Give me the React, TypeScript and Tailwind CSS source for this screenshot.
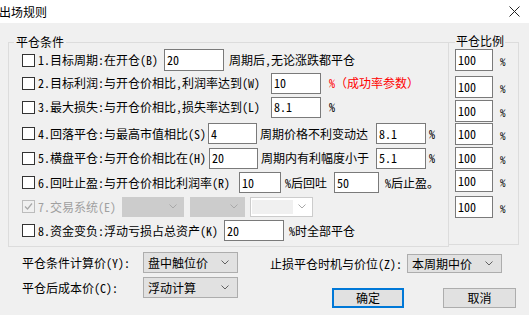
import React from "react";

const font = "font-[family-name:Noto_Sans_Mono_CJK_SC,Noto_Sans_CJK_SC,sans-serif]";

function Check({ disabled }: { disabled?: boolean }) {
    if (disabled) {
        return (
            <span className="flex h-[13px] w-[13px] shrink-0 items-center justify-center border border-[#bcbcbc] bg-[#f0f0f0]">
                <svg width="9" height="9" viewBox="0 0 9 9">
                    <path d="M1 4.5 L3.5 7 L8 1.5" stroke="#a8a8a8" fill="none" strokeWidth="1.2" />
                </svg>
            </span>
        );
    }
    return <span className="h-[13px] w-[13px] shrink-0 border border-[#333333] bg-white" />;
}

function Field({ value, className }: { value: string; className: string }) {
    return (
        <div className={`flex shrink-0 items-center border border-[#7a7a7a] bg-white pl-[2px] leading-none ${className}`}>
            {value}
        </div>
    );
}

function Chevron({ color = "#606060" }: { color?: string }) {
    return (
        <svg width="8" height="5" viewBox="0 0 8 5" className="shrink-0">
            <path d="M0.5 0.5 L4 4 L7.5 0.5" stroke={color} fill="none" strokeWidth="1" />
        </svg>
    );
}

function Combo({ label, className }: { label: string; className: string }) {
    return (
        <div className={`flex shrink-0 items-center justify-between border border-[#adadad] bg-[#e1e1e1] pl-[4px] pr-[8px] text-[12px] leading-none ${className}`}>
            <span>{label}</span>
            <Chevron />
        </div>
    );
}

const ratioTops = ["mt-[6px]", "mt-[5px]", "mt-[2px]", "mt-[1px]", "mt-[2px]", "mt-[1px]", "mt-[4px]"];

export default function App() {
    return (
        <div className={`h-[315px] w-[529px] overflow-hidden bg-[#f0f0f0] text-[12px] font-light text-black ${font}`}>
            {/* title bar */}
            <div className="flex h-[23px] items-center justify-between bg-white">
                <span className="ml-[-1px] text-[12px] leading-none">出场规则</span>
                <svg width="11" height="11" viewBox="0 0 11 11" className="mr-[9px]">
                    <path d="M0.5 0.5 L10.5 10.5 M10.5 0.5 L0.5 10.5" stroke="#222" strokeWidth="1" />
                </svg>
            </div>

            <div className="mt-[19px] flex pl-[8px]">
                {/* 平仓条件 */}
                <div className="relative h-[205px] w-[441px] border border-[#dcdcdc] pt-[5px]">
                    <span className="absolute left-[5px] top-[-9px] bg-[#f0f0f0] px-[2px] text-[12px] leading-[16px]">平仓条件</span>

                    <div className="flex h-[24px] items-center pl-[13px]">
                        <Check />
                        <span className="ml-[3px] w-[126px] shrink-0 whitespace-nowrap">1.目标周期:在开仓(B)</span>
                        <Field value="20" className="h-[22px] w-[60px]" />
                        <span className="ml-[5px] whitespace-nowrap">周期后,无论涨跌都平仓</span>
                    </div>

                    <div className="flex h-[22px] items-center pl-[13px]">
                        <Check />
                        <span className="ml-[3px] w-[233px] shrink-0 whitespace-nowrap">2.目标利润:与开仓价相比,利润率达到(W)</span>
                        <Field value="10" className="h-[21px] w-[50px]" />
                        <span className="ml-[8px] whitespace-nowrap text-[#ff0000]">%（成功率参数）</span>
                    </div>

                    <div className="flex h-[26px] items-center pl-[13px]">
                        <Check />
                        <span className="ml-[3px] w-[233px] shrink-0 whitespace-nowrap">3.最大损失:与开仓价相比,损失率达到(L)</span>
                        <Field value="8.1" className="h-[21px] w-[50px]" />
                        <span className="ml-[8px]">%</span>
                    </div>

                    <div className="flex h-[27px] items-center pl-[13px]">
                        <Check />
                        <span className="ml-[3px] w-[170px] shrink-0 whitespace-nowrap">4.回落平仓:与最高市值相比(S)</span>
                        <Field value="4" className="h-[21px] w-[49px]" />
                        <span className="ml-[3px] w-[116px] shrink-0 whitespace-nowrap">周期价格不利变动达</span>
                        <Field value="8.1" className="h-[21px] w-[50px]" />
                        <span className="ml-[3px]">%</span>
                    </div>

                    <div className="flex h-[22px] items-center pl-[13px]">
                        <Check />
                        <span className="ml-[3px] w-[171px] shrink-0 whitespace-nowrap">5.横盘平仓:与开仓价相比在(H)</span>
                        <Field value="20" className="h-[21px] w-[49px]" />
                        <span className="ml-[3px] w-[115px] shrink-0 whitespace-nowrap">周期内有利幅度小于</span>
                        <Field value="5.1" className="h-[21px] w-[50px]" />
                        <span className="ml-[3px]">%</span>
                    </div>

                    <div className="flex h-[27px] items-center pl-[13px]">
                        <Check />
                        <span className="ml-[3px] w-[201px] shrink-0 whitespace-nowrap">6.回吐止盈:与开仓价相比利润率(R)</span>
                        <Field value="10" className="h-[21px] w-[42px]" />
                        <span className="ml-[4px] w-[49px] shrink-0 whitespace-nowrap">%后回吐</span>
                        <Field value="50" className="h-[21px] w-[45px]" />
                        <span className="ml-[6px] whitespace-nowrap">%后止盈。</span>
                    </div>

                    <div className="flex h-[21px] items-center pl-[13px] text-[#a0a0a0]">
                        <Check disabled />
                        <span className="ml-[3px] w-[84px] shrink-0 whitespace-nowrap">7.交易系统(E)</span>
                        <div className="flex h-[20px] w-[62px] items-center justify-end border border-[#cccccc] bg-[#cccccc] pr-[6px]">
                            <Chevron color="#a8a8a8" />
                        </div>
                        <div className="ml-[6px] flex h-[20px] w-[55px] items-center justify-end border border-[#cccccc] bg-[#cccccc] pr-[6px]">
                            <Chevron color="#a8a8a8" />
                        </div>
                        <div className="ml-[5px] flex h-[20px] w-[63px] items-center justify-between border border-[#cccccc] bg-white pl-[1px] pr-[6px]">
                            <span className="h-[14px] w-[41px] bg-[#f0f0f0]" />
                            <Chevron color="#a8a8a8" />
                        </div>
                    </div>

                    <div className="flex h-[27px] items-center pl-[13px]">
                        <Check />
                        <span className="ml-[3px] w-[186px] shrink-0 whitespace-nowrap">8.资金变负:浮动亏损占总资产(K)</span>
                        <Field value="20" className="h-[21px] w-[60px]" />
                        <span className="ml-[5px] whitespace-nowrap">%时全部平仓</span>
                    </div>
                </div>

                {/* 平仓比例 */}
                <div className="relative ml-[-1px] flex h-[203px] w-[71px] flex-col border border-[#dcdcdc] pl-[6px]">
                    <span className="absolute left-[6px] top-[-10px] bg-[#f0f0f0] px-[1px] text-[12px] leading-[16px]">平仓比例</span>
                    {ratioTops.map((mt, i) => (
                        <div key={i} className={`flex items-center ${mt}`}>
                            <Field value="100" className="h-[22px] w-[38px]" />
                            <span className="ml-[7px] mt-[3px] text-[11px]">%</span>
                        </div>
                    ))}
                </div>
            </div>

            <div className="flex">
                <div className="flex w-[248px] shrink-0 flex-col gap-[4px] pl-[22px] pt-[5px]">
                    <div className="flex items-center">
                        <span className="w-[121px] shrink-0 whitespace-nowrap">平仓条件计算价(Y):</span>
                        <Combo label="盘中触位价" className="h-[21px] w-[95px]" />
                    </div>
                    <div className="flex items-center">
                        <span className="w-[121px] shrink-0 whitespace-nowrap">平仓后成本价(C):</span>
                        <Combo label="浮动计算" className="h-[21px] w-[95px]" />
                    </div>
                </div>
                <div className="flex flex-col pl-[22px] pt-[7px]">
                    <div className="flex items-center">
                        <span className="w-[137px] shrink-0 whitespace-nowrap">止损平仓时机与价位(Z):</span>
                        <Combo label="本周期中价" className="h-[19px] w-[95px]" />
                    </div>
                    <div className="mt-[15px] flex pl-[62px]">
                        <button className="flex h-[20px] w-[72px] items-center justify-center border-2 border-[#0078d7] bg-[#e1e1e1] text-[12px] leading-none">确定</button>
                        <button className="ml-[39px] flex h-[20px] w-[73px] items-center justify-center border border-[#adadad] bg-[#e1e1e1] text-[12px] leading-none">取消</button>
                    </div>
                </div>
            </div>
        </div>
    );
}
